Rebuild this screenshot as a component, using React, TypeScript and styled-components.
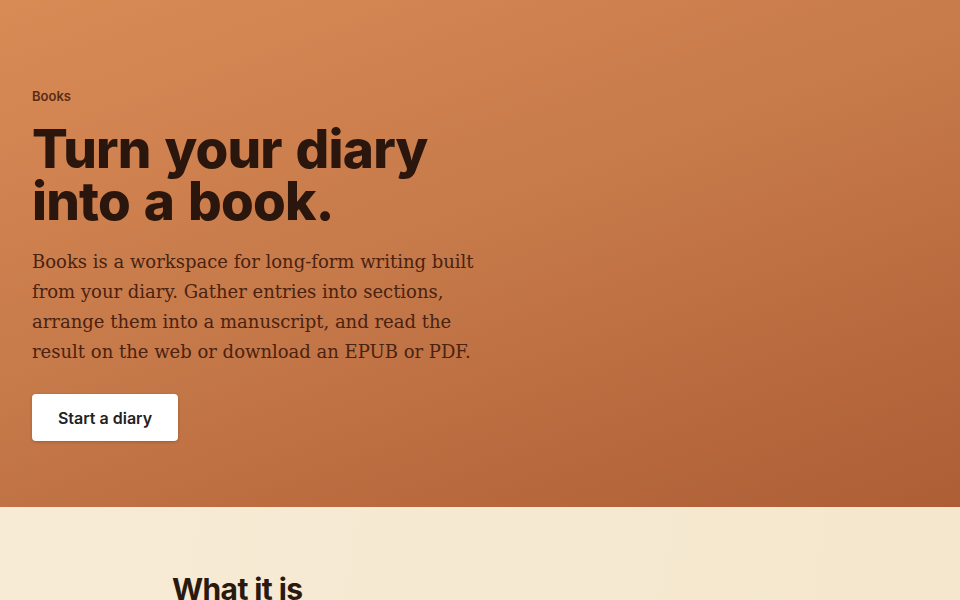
import React from "react";
import styled, { createGlobalStyle } from "styled-components";

const GlobalStyle = createGlobalStyle`
    html, body {
        margin: 0;
        padding: 0;
    }
    body {
        font-family: Inter, "Liberation Sans", sans-serif;
        background: #f6ead2;
    }
`;

const Hero = styled.section`
    height: 507px;
    box-sizing: border-box;
    padding: 88px 32px 0;
    background: linear-gradient(160deg, #d98b56 0%, #c77a4a 45%, #ad5e35 100%);
`;

const HeroInner = styled.div`
    display: flex;
    flex-direction: column;
    align-items: flex-start;
    max-width: 460px;
`;

const Eyebrow = styled.div`
    font-size: 13px;
    font-weight: 600;
    color: #5a2c17;
    line-height: 16px;
`;

const Title = styled.h1`
    margin: 19px 0 0;
    font-family: Inter, "Liberation Sans", sans-serif;
    font-size: 53px;
    font-weight: 800;
    line-height: 52px;
    letter-spacing: -0.015em;
    word-spacing: 3px;
    color: #2a160d;
`;

const Lead = styled.p`
    margin: 20px 0 0;
    font-family: "DejaVu Serif", "Liberation Serif", serif;
    font-size: 18px;
    line-height: 30px;
    color: #4a2210;
    width: 460px;
`;

const PrimaryButton = styled.button`
    margin-top: 27px;
    width: 146px;
    height: 47px;
    border: none;
    border-radius: 4px;
    background: #fff;
    color: #222;
    font-family: Inter, "Liberation Sans", sans-serif;
    font-size: 16px;
    font-weight: 600;
    box-shadow: 0 1px 3px rgba(60, 25, 5, 0.25);
    cursor: pointer;
`;

const About = styled.section`
    min-height: 200px;
    padding: 64px 172px 0;
    background: linear-gradient(100deg, #f8ebd6 0%, #f4e7cd 100%);
`;

const SectionTitle = styled.h2`
    margin: 0;
    font-size: 30px;
    font-weight: 700;
    letter-spacing: -0.02em;
    color: #2a1a0e;
`;

export default function App() {
    return (
        <>
            <GlobalStyle />
            <Hero>
                <HeroInner>
                    <Eyebrow>Books</Eyebrow>
                    <Title>
                        Turn your diary
                        <br />
                        into a book.
                    </Title>
                    <Lead>
                        Books is a workspace for long-form writing built from your diary. Gather entries
                        into sections, arrange them into a manuscript, and read the result on the web or
                        download an EPUB or PDF.
                    </Lead>
                    <PrimaryButton>Start a diary</PrimaryButton>
                </HeroInner>
            </Hero>
            <About>
                <SectionTitle>What it is</SectionTitle>
            </About>
        </>
    );
}
